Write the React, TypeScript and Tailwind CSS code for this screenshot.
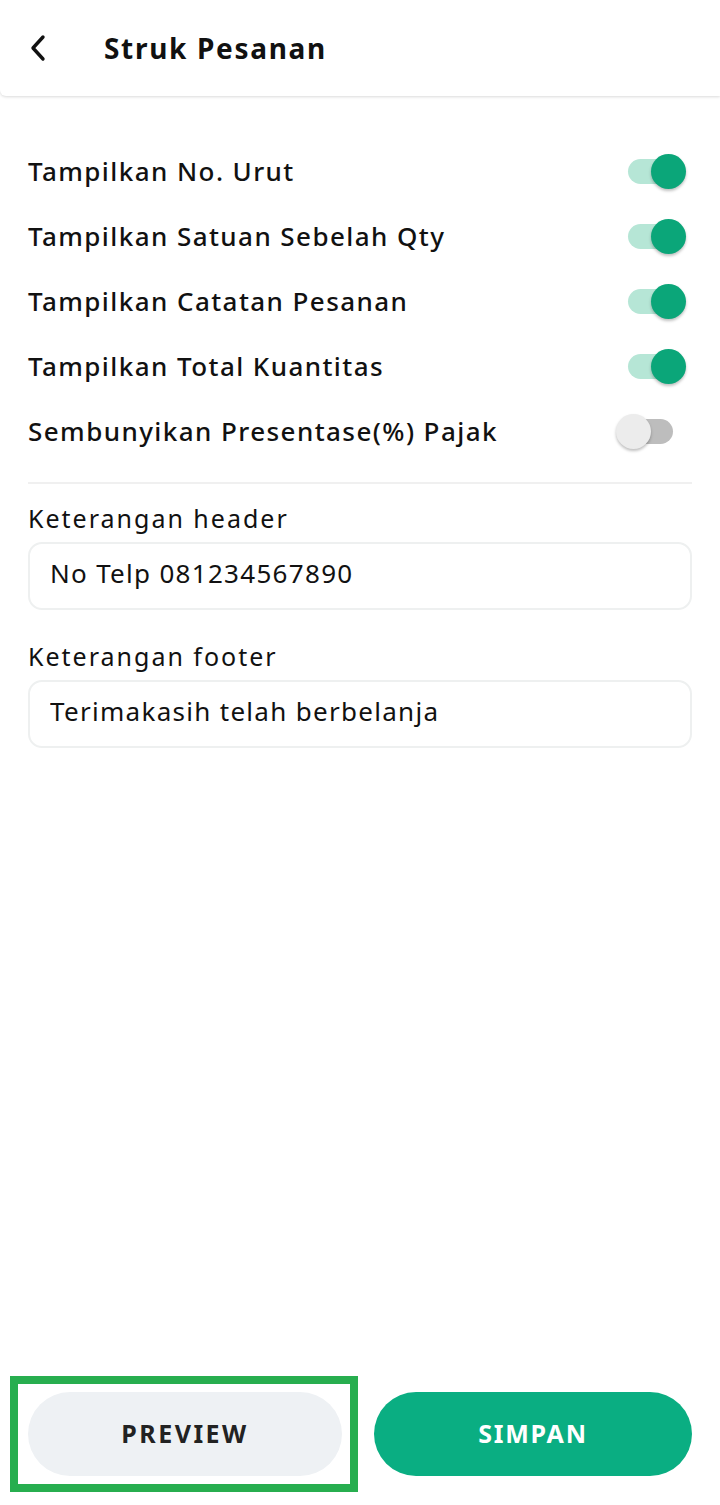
import { useState } from 'react';

const OPTIONS = [
  { label: 'Tampilkan No. Urut', on: true },
  { label: 'Tampilkan Satuan Sebelah Qty', on: true },
  { label: 'Tampilkan Catatan Pesanan', on: true },
  { label: 'Tampilkan Total Kuantitas', on: true },
  { label: 'Sembunyikan Presentase(%) Pajak', on: false },
];

function Toggle({ on, onClick }: { on: boolean; onClick: () => void }) {
  return (
    <button onClick={onClick} className="relative w-[70px] h-[36px] mr-[6px] flex items-center shrink-0">
      <span
        className={`absolute left-[12px] w-[45px] h-[25px] rounded-full ${on ? 'bg-[#b6e6d6]' : 'bg-[#bdbdbd]'}`}
      />
      <span
        className={`absolute top-0 w-[35px] h-[35px] rounded-full shadow-[0_2px_3px_rgba(0,0,0,0.25)] ${
          on ? 'left-[35px] bg-[#0ba679]' : 'left-0 bg-[#ececec]'
        }`}
      />
    </button>
  );
}

export default function App() {
  const [opts, setOpts] = useState(OPTIONS.map(o => o.on));
  const [header, setHeader] = useState('No Telp 081234567890');
  const [footer, setFooter] = useState('Terimakasih telah berbelanja');

  return (
    <div className="min-h-screen bg-white flex flex-col text-[#111] font-['Noto_Sans',sans-serif]">
      <header className="h-[96px] bg-white shadow-[0_1px_3px_rgba(0,0,0,0.15)] rounded-bl-[6px] flex items-center">
        <button className="w-[104px] h-full flex items-center pl-[28px]">
          <svg width="22" height="28" viewBox="0 0 22 28" fill="none">
            <path d="M15 3 L5 14 L15 25" stroke="#111" strokeWidth="3.4" strokeLinecap="round" strokeLinejoin="round" />
          </svg>
        </button>
        <h1 className="text-[28px] font-bold tracking-[0.06em]">Struk Pesanan</h1>
      </header>

      <main className="flex-1 px-[28px] pt-[43px]">
        <div className="flex flex-col">
          {OPTIONS.map((o, i) => (
            <div key={o.label} className="h-[65px] flex items-center justify-between">
              <span className="text-[26px] font-medium tracking-[0.055em]">{o.label}</span>
              <Toggle on={opts[i]} onClick={() => setOpts(p => p.map((v, j) => (j === i ? !v : v)))} />
            </div>
          ))}
        </div>

        <div className="h-[2px] bg-[#f0f0f0] mt-[18px]" />

        <label className="block text-[25px] tracking-[0.08em] mt-[16px] leading-[36px]">Keterangan header</label>
        <input
          value={header}
          onChange={e => setHeader(e.target.value)}
          className="mt-[6px] w-full h-[68px] rounded-[14px] border-2 border-[#eef0f0] px-[20px] pb-[6px] text-[26px] tracking-[0.05em] outline-none"
        />

        <label className="block text-[25px] tracking-[0.08em] mt-[28px] leading-[36px]">Keterangan footer</label>
        <input
          value={footer}
          onChange={e => setFooter(e.target.value)}
          className="mt-[6px] w-full h-[68px] rounded-[14px] border-2 border-[#eef0f0] px-[20px] pb-[6px] text-[26px] tracking-[0.05em] outline-none"
        />
      </main>

      <footer className="px-[10px] pb-[13px] flex items-center gap-[16px]">
        <div className="border-[8px] border-[#27ae4f] p-[8px] pl-[10px] w-[348px]">
          <button className="w-full h-[84px] rounded-full bg-[#eef1f4] text-[25px] font-bold tracking-[0.1em] text-[#222]">
            PREVIEW
          </button>
        </div>
        <button className="flex-1 mr-[18px] h-[84px] rounded-full bg-[#0aae82] text-[25px] font-bold tracking-[0.07em] text-white">
          SIMPAN
        </button>
      </footer>
    </div>
  );
}
